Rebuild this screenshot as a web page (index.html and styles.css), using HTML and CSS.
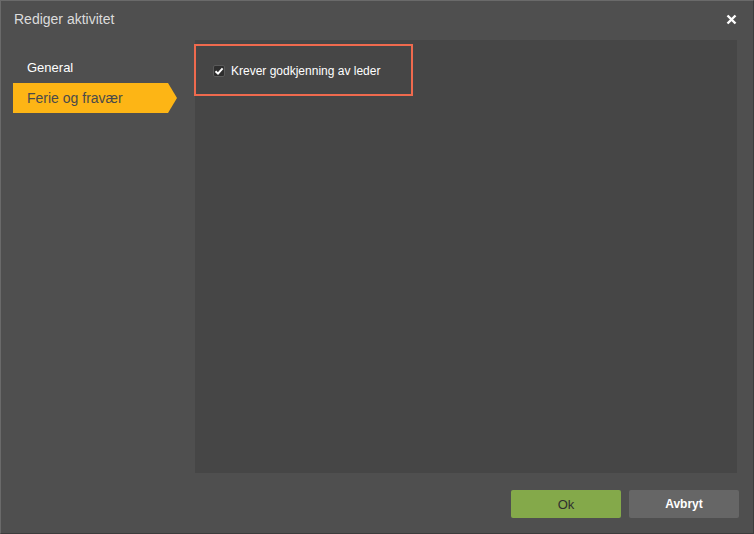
FILE: index.html
```html
<!DOCTYPE html>
<html lang="no">
<head>
  <meta charset="UTF-8">
  <title>Rediger aktivitet</title>
  <link rel="stylesheet" href="styles.css">
</head>
<body>
  <div class="dialog">
    <div class="dialog-header">
      <span class="dialog-title">Rediger aktivitet</span>
      <svg class="dialog-close" width="11" height="11" viewBox="0 0 11 11"><path d="M1.5 1.5 L9.5 9.5 M9.5 1.5 L1.5 9.5" stroke="#fff" stroke-width="2.4"/></svg>
    </div>
    <div class="dialog-body">
      <ul class="side-nav">
        <li>General</li>
        <li class="active">Ferie og fravær</li>
      </ul>
      <div class="content">
        <div class="highlight">
          <label class="check">
            <span class="check-box">
              <svg width="10" height="10" viewBox="0 0 10 10"><path d="M1.5 5.2 L4 7.6 L8.6 2.4" fill="none" stroke="#fff" stroke-width="2"/></svg>
            </span>
            Krever godkjenning av leder
          </label>
        </div>
      </div>
    </div>
    <div class="dialog-footer">
      <button class="btn btn-ok">Ok</button>
      <button class="btn btn-cancel">Avbryt</button>
    </div>
  </div>
</body>
</html>
```

FILE: styles.css
```css
body {
  margin: 0;
  background: #2e2e2e;
  font-family: Arial, "Liberation Sans", sans-serif;
}

.dialog {
  width: 752px;
  height: 532px;
  background: #4f4f4f;
  border-top: 1px solid #6a6a6a;
  border-left: 1px solid #6a6a6a;
  border-right: 1px solid #3c3c3c;
  border-bottom: 1px solid #3c3c3c;
  display: flex;
  flex-direction: column;
}

.dialog-header {
  height: 39px;
  display: flex;
  align-items: center;
  justify-content: space-between;
  padding: 0 16px 0 13px;
}

.dialog-title {
  color: #dcdcdc;
  font-size: 14px;
  margin-top: -4px;
}

.dialog-close {
  margin-top: -3px;
}

.dialog-body {
  display: flex;
  height: 433px;
}

.side-nav {
  list-style: none;
  margin: 0;
  padding: 13px 0 0 12px;
  width: 182px;
}

.side-nav li {
  height: 30px;
  line-height: 30px;
  padding-left: 14px;
  color: #fff;
  font-size: 13px;
  width: 142px;
}

.side-nav li.active {
  background: #fdb515;
  color: #4a4a4a;
  font-size: 14px;
  clip-path: polygon(0 0, 155px 0, 164px 50%, 155px 100%, 0 100%);
  width: 150px;
}

.content {
  width: 542px;
  background: #464646;
  padding: 4px 0 0 0;
  box-sizing: border-box;
}

.highlight {
  width: 219px;
  height: 52px;
  border: 2px solid #ef6a4e;
  box-sizing: border-box;
  margin-left: -1px;
  display: flex;
  align-items: center;
  padding-left: 17px;
}

.check {
  display: flex;
  align-items: center;
  color: #fff;
  font-size: 12px;
  margin-top: 1px;
}

.check-box {
  width: 12px;
  height: 12px;
  background: #2e2e2e;
  border: 1px solid #5a5a5a;
  border-radius: 2px;
  display: flex;
  align-items: center;
  justify-content: center;
  margin-right: 6px;
  box-sizing: border-box;
}

.dialog-footer {
  display: flex;
  justify-content: flex-end;
  gap: 8px;
  padding: 17px 14px 0 0;
}

.btn {
  width: 110px;
  height: 28px;
  border: none;
  border-radius: 2px;
  font-family: Arial, "Liberation Sans", sans-serif;
  font-size: 12px;
}

.btn-ok {
  background: #84a94a;
  color: #2f2f2f;
  font-size: 13px;
}

.btn-cancel {
  background: #666;
  color: #fff;
  font-weight: bold;
}
```
